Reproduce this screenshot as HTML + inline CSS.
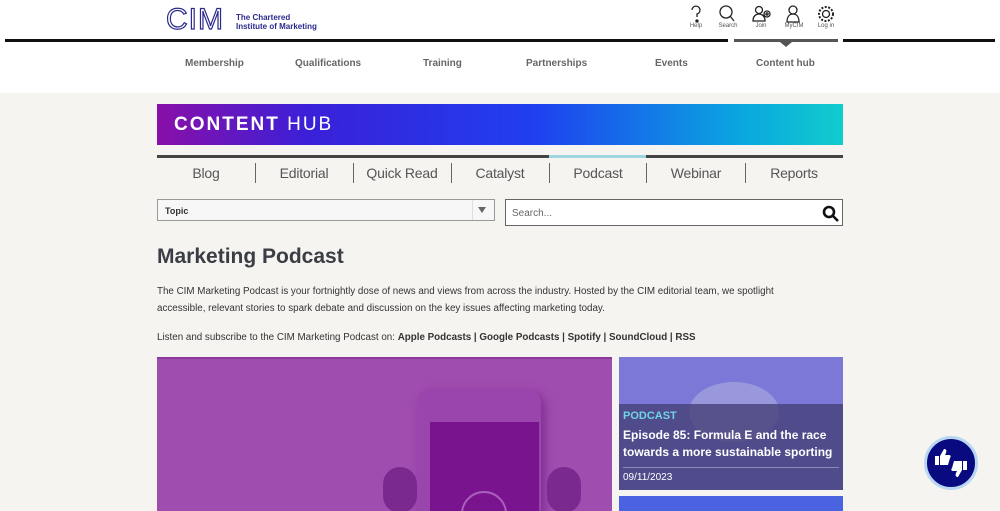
<!DOCTYPE html>
<html><head><style>
*{margin:0;padding:0;box-sizing:border-box}
html,body{width:1000px;height:511px;overflow:hidden}
body{background:#f5f4f1;font-family:"Liberation Sans",sans-serif;position:relative}
.abs{position:absolute}
.hdr{left:0;top:0;width:1000px;height:93px;background:#fff}
.nav{top:58px;font-size:10px;font-weight:bold;color:#666}
.ico{top:4px;width:24px;text-align:center;font-size:6px;color:#555}
.tab{top:165px;font-size:14px;color:#555;text-align:center;width:98px;letter-spacing:-0.2px}
.sep{top:163px;width:1px;height:20px;background:#666}
p{font-size:9.8px;color:#333;line-height:17px}
</style></head><body>
<div class="abs hdr"></div>
<svg class="abs" style="left:164px;top:3px" width="70" height="30"><text x="2" y="26" font-family="Liberation Sans" font-size="30" fill="none" stroke="#2b2a8c" stroke-width="1.2" letter-spacing="1">CIM</text></svg>
<div class="abs" style="left:236px;top:13px;font-size:8px;color:#2b2a8c;line-height:9px;font-weight:bold">The Chartered<br>Institute of Marketing</div>
<svg class="abs" style="left:686px;top:4px" width="155" height="20" fill="none" stroke="#222" stroke-width="1.3">
<path d="M6 6a4 4 0 1 1 5 4v3" /><circle cx="11" cy="17" r="1" fill="#222"/>
<circle cx="40" cy="8" r="6"/><path d="M44 12l4 5"/>
<circle cx="73" cy="6" r="3.5"/><path d="M67 17c0-5 3-7 6-7s6 2 6 7z"/><circle cx="81" cy="10" r="3"/><path d="M81 8v4M79 10h4"/>
<circle cx="107" cy="6" r="4"/><path d="M101 18c0-6 3-8 6-8s6 2 6 8z"/>
<circle cx="140" cy="10" r="7" stroke-dasharray="2 1.5" stroke-width="2"/><circle cx="140" cy="10" r="3.5"/>
</svg>
<div class="abs ico" style="left:684px;top:23px">Help</div>
<div class="abs ico" style="left:716px;top:23px">Search</div>
<div class="abs ico" style="left:749px;top:23px">Join</div>
<div class="abs ico" style="left:782px;top:23px">MyCIM</div>
<div class="abs ico" style="left:814px;top:23px">Log in</div>
<div class="abs" style="left:5px;top:39px;width:723px;height:3px;background:#111"></div>
<div class="abs" style="left:734px;top:39px;width:104px;height:3px;background:#555"></div>
<div class="abs" style="left:780px;top:42px;width:0;height:0;border-left:6px solid transparent;border-right:6px solid transparent;border-top:5px solid #555"></div>
<div class="abs" style="left:843px;top:39px;width:152px;height:3px;background:#111"></div>
<div class="abs nav" style="left:185px">Membership</div>
<div class="abs nav" style="left:295px">Qualifications</div>
<div class="abs nav" style="left:423px">Training</div>
<div class="abs nav" style="left:526px">Partnerships</div>
<div class="abs nav" style="left:655px">Events</div>
<div class="abs nav" style="left:756px">Content hub</div>

<div class="abs" style="left:157px;top:104px;width:686px;height:41px;background:linear-gradient(90deg,#8a0fa8 0%,#3a20d8 22%,#1f3ff0 55%,#0aa6e0 85%,#11cccc 100%)"></div>
<div class="abs" style="left:174px;top:114px;font-size:19px;color:#fff;letter-spacing:2px"><b>CONTENT</b> HUB</div>

<div class="abs" style="left:157px;top:155px;width:392px;height:3px;background:#444"></div>
<div class="abs" style="left:549px;top:155px;width:97px;height:3px;background:#9fd5e0"></div>
<div class="abs" style="left:646px;top:155px;width:197px;height:3px;background:#444"></div>
<div class="abs tab" style="left:157px">Blog</div>
<div class="abs tab" style="left:255px">Editorial</div>
<div class="abs tab" style="left:353px">Quick Read</div>
<div class="abs tab" style="left:451px">Catalyst</div>
<div class="abs tab" style="left:549px">Podcast</div>
<div class="abs tab" style="left:647px">Webinar</div>
<div class="abs tab" style="left:745px">Reports</div>
<div class="abs sep" style="left:255px"></div><div class="abs sep" style="left:353px"></div><div class="abs sep" style="left:451px"></div><div class="abs sep" style="left:549px"></div><div class="abs sep" style="left:646px"></div><div class="abs sep" style="left:745px"></div>

<div class="abs" style="left:157px;top:199px;width:338px;height:22px;border:1px solid #999;background:#f7f7f7;font-size:9px;font-weight:bold;padding:6px 7px;color:#333">Topic</div>
<div class="abs" style="left:472px;top:200px;width:1px;height:20px;background:#ddd"></div>
<div class="abs" style="left:478px;top:207px;border-left:4px solid transparent;border-right:4px solid transparent;border-top:6px solid #666"></div>
<div class="abs" style="left:505px;top:199px;width:338px;height:27px;border:1px solid #666;background:#fff;font-size:10px;padding:8px 6px;color:#666">Search...</div>
<svg class="abs" style="left:822px;top:205px" width="18" height="18" fill="none" stroke="#111" stroke-width="2.6"><circle cx="7" cy="7" r="5"/><path d="M11 11l5 5"/></svg>

<div class="abs" style="left:157px;top:245px;font-size:21px;font-weight:bold;color:#3a3d44">Marketing Podcast</div>
<p class="abs" style="left:157px;top:283px;width:625px">The CIM Marketing Podcast is your fortnightly dose of news and views from across the industry. Hosted by the CIM editorial team, we spotlight accessible, relevant stories to spark debate and discussion on the key issues affecting marketing today.</p>
<p class="abs" style="left:157px;top:329px">Listen and subscribe to the CIM Marketing Podcast on: <b>Apple Podcasts | Google Podcasts | Spotify | SoundCloud | RSS</b></p>

<div class="abs" style="left:157px;top:357px;width:455px;height:154px;background:#a04db0;border-top:2px solid #8a3a9a;overflow:hidden">
<div class="abs" style="left:226px;top:108px;width:34px;height:46px;border-radius:17px;background:#7a2a8e"></div>
<div class="abs" style="left:390px;top:108px;width:34px;height:46px;border-radius:17px;background:#7a2a8e"></div>
<div class="abs" style="left:260px;top:30px;width:124px;height:140px;border-radius:14px;background:#9a44ad;box-shadow:4px 4px 10px #7d2f90"></div>
<div class="abs" style="left:273px;top:63px;width:109px;height:100px;background:#7a148e"></div>
<div class="abs" style="left:304px;top:132px;width:46px;height:46px;border-radius:50%;border:2px solid #a860bb"></div>
</div>

<div class="abs" style="left:619px;top:357px;width:224px;height:133px;background:#7b78d8;overflow:hidden">
<div class="abs" style="left:70px;top:25px;width:90px;height:60px;border-radius:50%;background:#9a98dc"></div>
<div class="abs" style="left:0;top:47px;width:224px;height:86px;background:rgba(70,65,120,.8)"></div>
<div class="abs" style="left:4px;top:53px;font-size:11px;font-weight:bold;color:#6fd3e6">PODCAST</div>
<div class="abs" style="left:4px;top:70px;font-size:12px;font-weight:bold;color:#fff;line-height:17px;width:222px">Episode 85: Formula E and the race towards a more sustainable sporting</div>
<div class="abs" style="left:4px;top:110px;width:216px;height:1px;background:#8c88b8"></div>
<div class="abs" style="left:4px;top:115px;font-size:10px;color:#fff">09/11/2023</div>
</div>
<div class="abs" style="left:619px;top:496px;width:224px;height:15px;background:#4a63e0"></div>

<div class="abs" style="left:924px;top:436px;width:54px;height:54px;border-radius:50%;background:#0a0a80;border:3px solid #b9d6f2"></div>
<svg class="abs" style="left:932px;top:446px" width="38" height="34" fill="#fff"><path d="M3 10h4v9H3zM8 10l4-7c2 0 3 1 2 4l-1 2h4c2 0 2 2 1 3l-2 7H8z"/><path d="M35 24h-4v-9h4zM30 24l-4 7c-2 0-3-1-2-4l1-2h-4c-2 0-2-2-1-3l2-7h8z"/></svg>
</body></html>
